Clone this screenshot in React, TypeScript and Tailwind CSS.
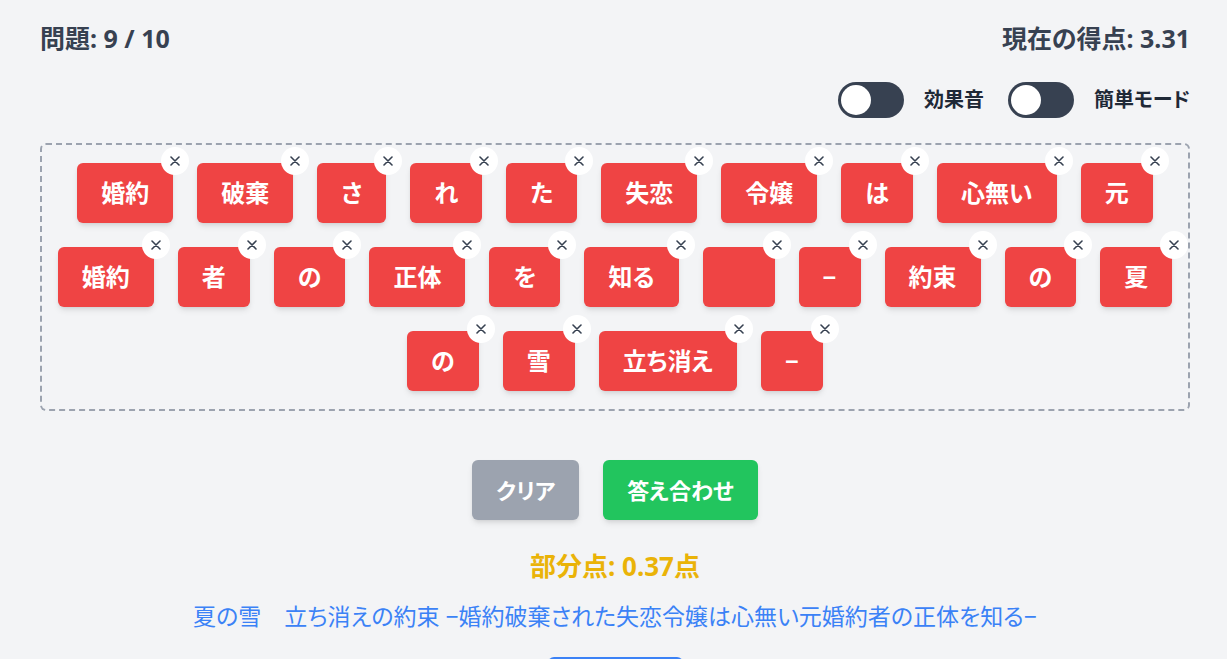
import { useState } from "react";

// Answer tokens placed so far, in order
const placed = [
  "婚約", "破棄", "さ", "れ", "た", "失恋", "令嬢", "は", "心無い", "元",
  "婚約", "者", "の", "正体", "を", "知る", "　", "−", "約束", "の", "夏",
  "の", "雪", "立ち消え", "−",
];

function Toggle({ label, on, onChange }: { label: string; on: boolean; onChange: () => void }) {
  return (
    <label className="flex items-center cursor-pointer" onClick={onChange}>
      <span className="relative w-[66px] h-9 rounded-full bg-[#374151]">
        <span
          className={`absolute top-[3px] w-[30px] h-[30px] rounded-full bg-white transition-all ${
            on ? "left-[33px]" : "left-[3px]"
          }`}
        />
      </span>
      <span className="ml-5 text-xl font-semibold text-[#1f2937]">{label}</span>
    </label>
  );
}

function Tile({ text, onRemove }: { text: string; onRemove: () => void }) {
  return (
    <div className="relative">
      <div className="h-[60px] px-6 flex items-center rounded-md bg-[#ef4444] text-white text-2xl font-bold shadow-md whitespace-pre">
        {text}
      </div>
      <button
        onClick={onRemove}
        className="absolute -top-4 -right-4 w-7 h-7 rounded-full bg-white flex items-center justify-center"
      >
        <svg width="10" height="10" viewBox="0 0 10 10" className="text-[#374151]">
          <path d="M1 1 9 9M9 1 1 9" stroke="currentColor" strokeWidth="1.6" strokeLinecap="round" />
        </svg>
      </button>
    </div>
  );
}

export default function App() {
  const [tokens, setTokens] = useState(placed);
  const [sound, setSound] = useState(false);
  const [easy, setEasy] = useState(false);

  return (
    <div className="min-h-screen bg-[#f3f4f6] pl-10 pr-[37px] pt-[22px] font-['Noto_Sans','Noto_Sans_CJK_JP',sans-serif] [font-feature-settings:'palt']">
      <div className="flex justify-between items-center text-[25px] leading-8 font-bold text-[#374151]">
        <span>問題: 9 / 10</span>
        <span>現在の得点: 3.31</span>
      </div>

      <div className="mt-7 flex justify-end items-center gap-6">
        <Toggle label="効果音" on={sound} onChange={() => setSound(!sound)} />
        <Toggle label="簡単モード" on={easy} onChange={() => setEasy(!easy)} />
      </div>

      <div className="mt-[25px] border-2 border-dashed border-[#9ca3af] rounded-md px-3 py-[18px] flex flex-wrap justify-center gap-6">
        {tokens.map((t, i) => (
          <Tile key={i} text={t} onRemove={() => setTokens(tokens.filter((_, j) => j !== i))} />
        ))}
      </div>

      <div className="mt-[49px] flex justify-center gap-6">
        <button className="h-[60px] px-6 rounded-md bg-[#9ca3af] text-white text-[22px] font-bold shadow-md">
          クリア
        </button>
        <button className="h-[60px] px-6 rounded-md bg-[#22c55e] text-white text-[22px] font-bold shadow-md">
          答え合わせ
        </button>
      </div>

      <p className="mt-[30px] text-center text-[26px] leading-8 font-bold text-[#eab308]">部分点: 0.37点</p>

      <p className="mt-[18px] text-center text-[23px] leading-8 text-[#3b82f6]">
        夏の雪　立ち消えの約束 −婚約破棄された失恋令嬢は心無い元婚約者の正体を知る−
      </p>

      <div className="mt-[25px] flex justify-center pb-10">
        <button className="w-[135px] h-[60px] rounded-md bg-[#3b82f6] text-white text-xl font-bold shadow-md">
          次の問題
        </button>
      </div>
    </div>
  );
}
